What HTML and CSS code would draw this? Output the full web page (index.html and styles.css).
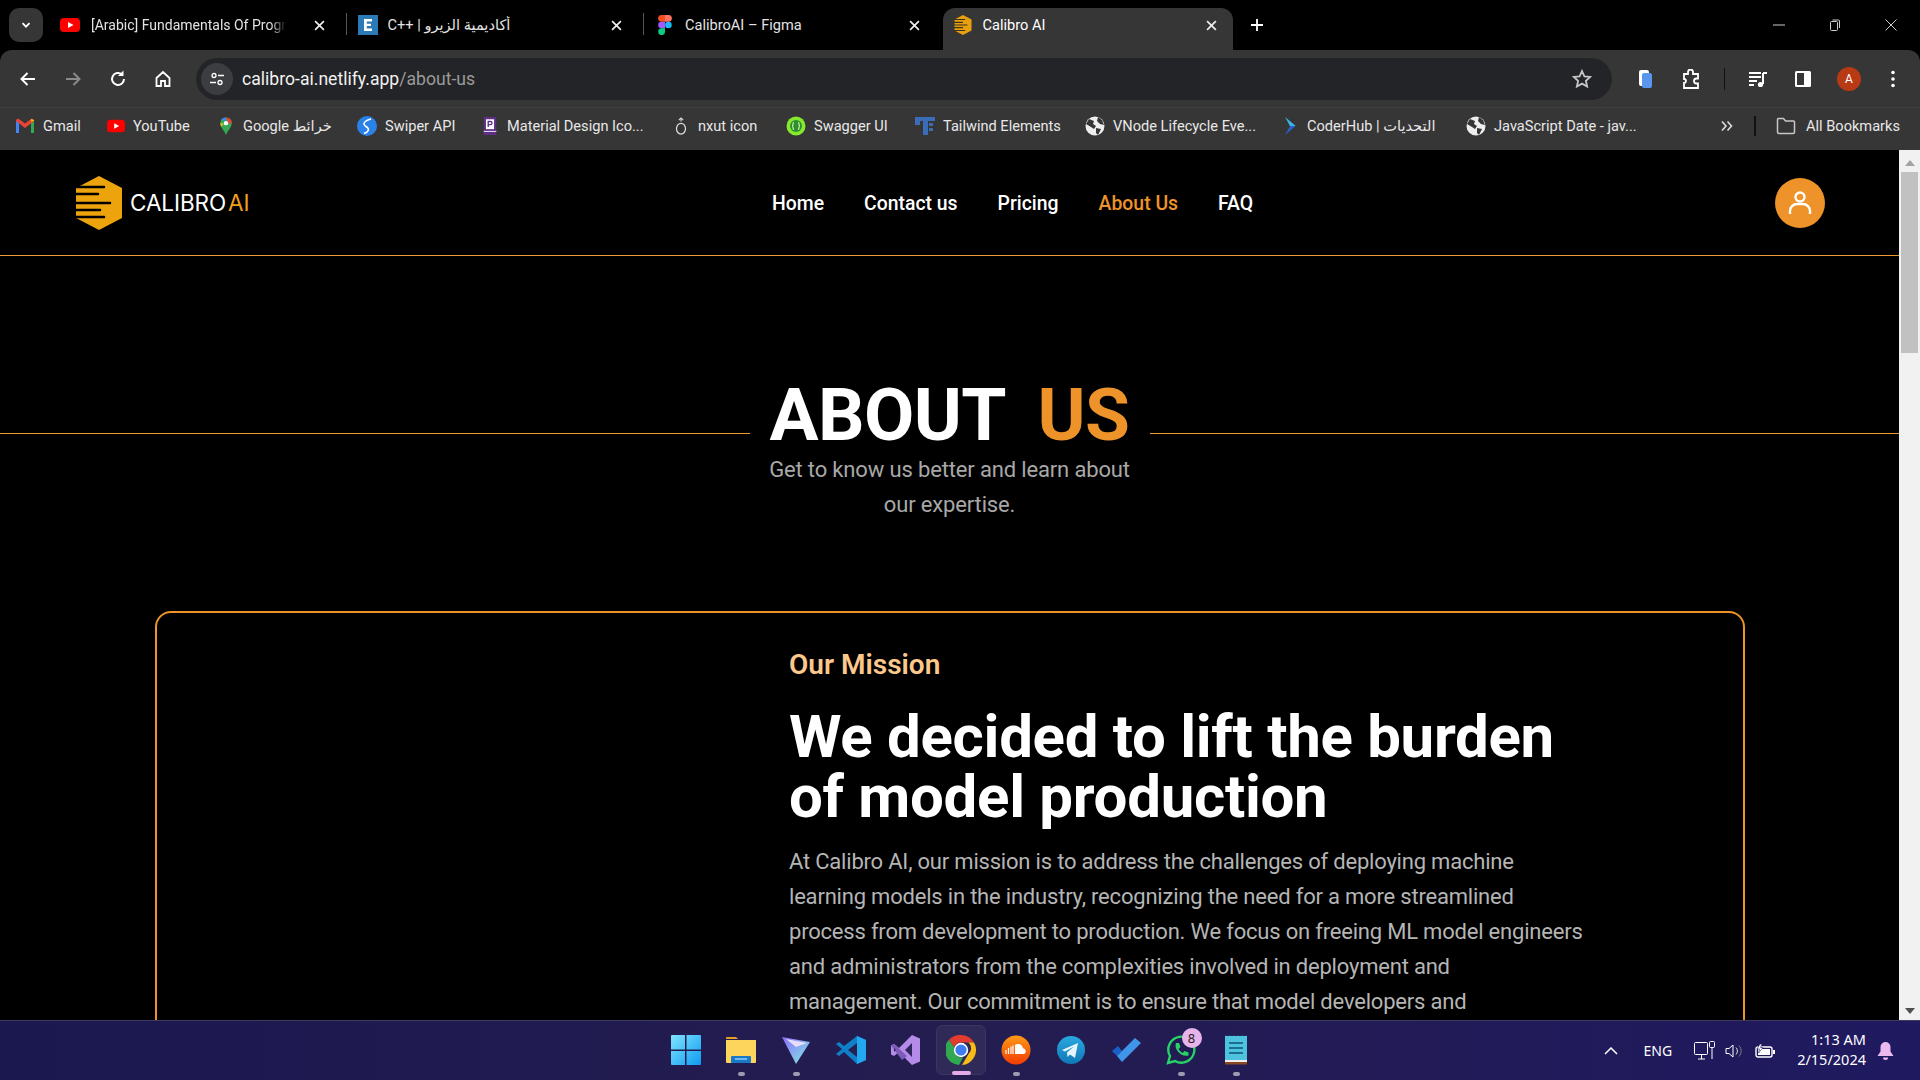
FILE: index.html
```html
<!DOCTYPE html>
<html lang="en">
<head>
<meta charset="utf-8">
<title>Calibro AI</title>
<link rel="stylesheet" href="styles.css">
</head>
<body>
<div class="tabstrip">
  <div class="tabmenu"><svg width="12" height="12" viewBox="0 0 12 12"><path d="M2.5 4.2 6 7.7l3.500-3.500" fill="none" stroke="#fff" stroke-width="1.800"/></svg></div>
  <div class="tabs">
    <div class="tab sep">
      <svg class="fav" viewBox="0 0 20 20"><rect y="3" width="20" height="14" rx="4" fill="#f00"/><path d="M8 7l5.500 3L8 13z" fill="#fff"/></svg>
      <span class="tabtitle fade">[Arabic] Fundamentals Of Progr</span>
      <svg class="close" viewBox="0 0 10 10"><path d="M1 1l8 8M9 1l-8 8" stroke="#eee" stroke-width="1.500"/></svg>
    </div>
    <div class="tab sep">
      <svg class="fav" viewBox="0 0 20 20"><rect width="20" height="20" fill="#2a7ab8"/><path d="M6 4h8v2.400H8.800v2.300H13V11H8.800v2.600H14V16H6z" fill="#fff"/></svg>
      <span class="tabtitle">C++ | أكاديمية الزيرو</span>
      <svg class="close" viewBox="0 0 10 10"><path d="M1 1l8 8M9 1l-8 8" stroke="#eee" stroke-width="1.500"/></svg>
    </div>
    <div class="tab">
      <svg class="fav" viewBox="0 0 14 20"><path d="M3.500 0H7v6.700H3.500a3.350 3.350 0 0 1 0-6.700z" fill="#f24e1e"/><path d="M7 0h3.500a3.350 3.350 0 0 1 0 6.700H7z" fill="#ff7262"/><path d="M3.500 6.700H7v6.600H3.500a3.300 3.300 0 0 1 0-6.600z" fill="#a259ff"/><circle cx="10.400" cy="10" r="3.300" fill="#1abcfe"/><path d="M3.500 13.300H7v3.400a3.400 3.400 0 1 1-3.500-3.400z" fill="#0acf83"/></svg>
      <span class="tabtitle">CalibroAI – Figma</span>
      <svg class="close" viewBox="0 0 10 10"><path d="M1 1l8 8M9 1l-8 8" stroke="#eee" stroke-width="1.500"/></svg>
    </div>
    <div class="tab active">
      <svg class="fav" viewBox="0 0 48 54"><path d="M24 0l23 12v30L24 54 1 42V12z" fill="#e8a00e"/><path d="M0 12h30M0 20h24M0 27h36M0 34h24M0 42h30" stroke="#3a3020" stroke-width="3"/></svg>
      <span class="tabtitle">Calibro AI</span>
      <svg class="close" viewBox="0 0 10 10"><path d="M1 1l8 8M9 1l-8 8" stroke="#eee" stroke-width="1.500"/></svg>
    </div>
    <div class="newtab"><svg width="14" height="14" viewBox="0 0 14 14"><path d="M7 1v12M1 7h12" stroke="#fff" stroke-width="1.800"/></svg></div>
  </div>
  <div class="winctl">
    <svg width="12" height="12" viewBox="0 0 12 12"><path d="M0 6h12" stroke="#ccc"/></svg>
    <svg width="12" height="12" viewBox="0 0 12 12"><rect x="1.500" y="2.500" width="7" height="9" rx="1" fill="none" stroke="#ccc"/><path d="M3.500 1h6a1 1 0 0 1 1 1v7" fill="none" stroke="#ccc"/></svg>
    <svg width="12" height="12" viewBox="0 0 12 12"><path d="M0.500 0.500l11 11M11.500 0.500l-11 11" stroke="#ccc"/></svg>
  </div>
</div>

<div class="toolbar">
  <svg class="tool" viewBox="0 0 20 20"><path d="M17 10H4M9.500 4 3.500 10l6 6" fill="none" stroke="#fff" stroke-width="2"/></svg>
  <svg class="tool" viewBox="0 0 20 20"><path d="M3 10h13M10.500 4l6 6-6 6" fill="none" stroke="#8a8a8a" stroke-width="2"/></svg>
  <svg class="tool" viewBox="0 0 20 20"><path d="M16 10a6 6 0 1 1-2-4.500" fill="none" stroke="#fff" stroke-width="2"/><path d="M15.500 1.500v5.500H10z" fill="#fff"/></svg>
  <svg class="tool" viewBox="0 0 20 20"><path d="M3.500 9 10 3l6.500 6v8h-4.500v-5H8v5H3.500z" fill="none" stroke="#fff" stroke-width="1.800"/></svg>
  <div class="omnibox">
    <div class="siteinfo"><svg width="16" height="16" viewBox="0 0 16 16"><circle cx="5" cy="4.500" r="2" fill="none" stroke="#fff" stroke-width="1.300"/><path d="M9 4.500h6M1 11.500h6" stroke="#fff" stroke-width="1.300"/><circle cx="11" cy="11.500" r="2" fill="none" stroke="#fff" stroke-width="1.300"/></svg></div>
    <span class="url">calibro-ai.netlify.app<span class="urlpath">/about-us</span></span>
    <svg class="star" viewBox="0 0 20 20"><path d="M10 2l2.400 5.300 5.800.6-4.300 3.900 1.200 5.700-5.100-2.900-5.100 2.900 1.200-5.700L1.800 7.900l5.800-.6z" fill="none" stroke="#c7c7c7" stroke-width="1.800"/></svg>
  </div>
  <div class="toolright">
    <svg class="tool ext" viewBox="0 0 20 20"><rect x="3" y="1" width="10" height="16" rx="2" fill="#fff"/><rect x="6" y="4" width="10" height="15" rx="2" fill="#5b96ee"/></svg>
    <svg class="tool ext" viewBox="0 0 20 20"><path d="M3 5h4V3a2.500 2.500 0 0 1 5 0v2h5v4.500h-1.500a2.500 2.500 0 0 0 0 5H17V19H3v-5a2 2 0 0 0 0-4z" fill="none" stroke="#fff" stroke-width="1.800"/></svg>
    <div class="tooldiv"></div>
    <svg class="tool ext" viewBox="0 0 20 20"><path d="M1 4h12M1 8h12M1 12h8M1 16h5" stroke="#fff" stroke-width="2"/><path d="M15 4v11" stroke="#fff" stroke-width="2"/><circle cx="12.500" cy="15.500" r="2.600" fill="#fff"/><path d="M15 4h4" stroke="#fff" stroke-width="2"/></svg>
    <svg class="tool ext" viewBox="0 0 20 20"><rect x="2" y="2" width="16" height="16" rx="1.500" fill="#fff"/><rect x="4" y="4" width="7" height="12" fill="#363636"/></svg>
    <div class="profile">A</div>
    <svg class="tool dots" viewBox="0 0 20 20"><circle cx="10" cy="3.500" r="1.800" fill="#fff"/><circle cx="10" cy="10" r="1.800" fill="#fff"/><circle cx="10" cy="16.500" r="1.800" fill="#fff"/></svg>
  </div>
</div>

<div class="bookmarks">
  <div class="bm"><svg class="bmi gm" viewBox="0 0 20 16"><path d="M1 15V3l3 .500V15z" fill="#4285f4"/><path d="M16 15V3.500l3-.500v12z" fill="#34a853"/><path d="M1 3l9 7 9-7v-.500A2 2 0 0 0 16 1l-6 4.500L4 1a2 2 0 0 0-3 1.500z" fill="#ea4335"/><path d="M16 3.500V1l3 1v1z" fill="#fbbc04"/></svg><span>Gmail</span></div>
  <div class="bm"><svg class="bmi" viewBox="0 0 20 20"><rect y="3" width="20" height="14" rx="4" fill="#f00"/><path d="M8 7l5.500 3L8 13z" fill="#fff"/></svg><span>YouTube</span></div>
  <div class="bm"><svg class="bmi" viewBox="0 0 16 22"><path d="M8 22C6 16 1 13 1 7.500a7 7 0 0 1 14 0C15 13 10 16 8 22z" fill="#34a853"/><path d="M2 3.500A7 7 0 0 1 8 .500V5z" fill="#4285f4"/><path d="M8 .500a7 7 0 0 1 7 7L11 8z" fill="#ea4335"/><path d="M1 7.500 5 8 2.500 12A8 8 0 0 1 1 7.500z" fill="#fbbc04"/><circle cx="8" cy="7.500" r="2.700" fill="#fff"/></svg><span>Google خرائط</span></div>
  <div class="bm"><svg class="bmi big" viewBox="0 0 20 20"><circle cx="10" cy="10" r="10" fill="#2a82e8"/><path d="M14 3C7 5 5 8 9 10.500s3 5-2 7" fill="none" stroke="#fff" stroke-width="1.500"/></svg><span>Swiper API</span></div>
  <div class="bm"><svg class="bmi" viewBox="0 0 16 20"><rect x="1" y="0" width="14" height="20" fill="#5e2f83"/><rect x="3.500" y="2.500" width="9" height="11" fill="#fff"/><path d="M6 11V5h2.500a1.600 1.600 0 0 1 0 3.500H6" fill="none" stroke="#5e2f83" stroke-width="1.500"/><path d="M1 16h14" stroke="#fff"/></svg><span>Material Design Ico...</span></div>
  <div class="bm"><svg class="bmi" viewBox="0 0 16 20"><ellipse cx="8" cy="13" rx="5" ry="6" fill="none" stroke="#ddd" stroke-width="1.400"/><path d="M8 1v4M5.500 3.500 8 1l2.500 2.500" fill="none" stroke="#ddd" stroke-width="1.200"/></svg><span>nxut icon</span></div>
  <div class="bm"><svg class="bmi big" viewBox="0 0 20 20"><circle cx="10" cy="10" r="9.500" fill="#85ea2d"/><circle cx="10" cy="10" r="6" fill="#2f8f30"/><path d="M8 6.500c-2 0 0 3.500-2 3.500 2 0 0 3.500 2 3.500M12 6.500c2 0 0 3.500 2 3.500-2 0 0 3.500-2 3.500" fill="none" stroke="#d8f8a8" stroke-width="1.200"/></svg><span>Swagger UI</span></div>
  <div class="bm"><svg class="bmi big" viewBox="0 0 20 20"><path d="M0 1h20v4h-7v14H8V5H5v4H0z" fill="#3b6cb8"/><path d="M14 7h4v3h-4zM14 12h4v3h-4z" fill="#3b6cb8"/></svg><span>Tailwind Elements</span></div>
  <div class="bm"><svg class="bmi big" viewBox="0 0 20 20"><circle cx="10" cy="10" r="9.500" fill="#eee"/><path d="M4 3l5 2-1 3 3 2-2 3-3-2-5-3zM13 1l4 3 2 5-4-1-3-3zM11 12l5 1-3 6-2-2z" fill="#363636"/></svg><span>VNode Lifecycle Eve...</span></div>
  <div class="bm"><svg class="bmi" viewBox="0 0 16 22"><path d="M2 0l13 11H8z" fill="#38b8e8"/><path d="M15 11 2 22l6-11z" fill="#2b5fc0"/></svg><span>CoderHub | التحديات</span></div>
  <div class="bm"><svg class="bmi big" viewBox="0 0 20 20"><circle cx="10" cy="10" r="9.500" fill="#eee"/><path d="M4 3l5 2-1 3 3 2-2 3-3-2-5-3zM13 1l4 3 2 5-4-1-3-3zM11 12l5 1-3 6-2-2z" fill="#363636"/></svg><span>JavaScript Date - jav...</span></div>
  <div class="bmmore"><svg width="14" height="12" viewBox="0 0 14 12"><path d="M2 1.500 6 6l-4 4.500M7.500 1.500l4 4.500-4 4.500" fill="none" stroke="#ddd" stroke-width="1.600"/></svg></div>
  <div class="bmdiv"></div>
  <div class="bm allbm"><svg class="bmi folder" viewBox="0 0 20 18"><path d="M1.500 2.500a1 1 0 0 1 1-1h5l2 2.500h8a1 1 0 0 1 1 1v10a1.500 1.500 0 0 1-1.500 1.500H3A1.500 1.500 0 0 1 1.500 15z" fill="none" stroke="#c7c7c7" stroke-width="1.500"/></svg><span>All Bookmarks</span></div>
</div>

<div class="viewport">
  <main class="page">
    <header class="site-head">
      <a class="logo">
        <svg class="logomark" viewBox="0 0 48 54"><path d="M24 0l23 12v30L24 54 1 42V12z" fill="#eda30c"/><path d="M-1 11h30M-1 18h24M-1 27h36M-1 34h26M-1 41h30" stroke="#000" stroke-width="2.600" stroke-linecap="round"/></svg>
        <span class="logotext">CALIBRO<b>AI</b></span>
      </a>
      <nav class="nav">
        <a>Home</a><a>Contact us</a><a>Pricing</a><a class="current">About Us</a><a>FAQ</a>
      </nav>
      <div class="avatar"><svg width="26" height="26" viewBox="0 0 26 26"><circle cx="13" cy="7" r="4.500" fill="none" stroke="#fff" stroke-width="2.400"/><path d="M3 24v-3a7 7 0 0 1 7-7h6a7 7 0 0 1 7 7v3" fill="none" stroke="#fff" stroke-width="2.400"/></svg></div>
    </header>

    <section class="hero">
      <div class="rule"></div>
      <div class="herotext">
        <h1>ABOUT <span>US</span></h1>
        <p>Get to know us better and learn about our expertise.</p>
      </div>
      <div class="rule"></div>
    </section>

    <section class="mission">
      <div class="missionimg"></div>
      <div class="missionbody">
        <h3>Our Mission</h3>
        <h2>We decided to lift the burden of model production</h2>
        <p>At Calibro AI, our mission is to address the challenges of deploying machine learning models in the industry, recognizing the need for a more streamlined process from development to production. We focus on freeing ML model engineers and administrators from the complexities involved in deployment and management. Our commitment is to ensure that model developers and</p>
      </div>
    </section>
  </main>
  <div class="scrollbar">
    <svg class="arrow" width="10" height="6" viewBox="0 0 10 6"><path d="M5 0l5 6H0z" fill="#a3a3a3"/></svg>
    <div class="thumb"></div>
    <svg class="arrow down" width="10" height="6" viewBox="0 0 10 6"><path d="M5 6l5-6H0z" fill="#505050"/></svg>
  </div>
</div>

<footer class="taskbar">
  <div class="dock">
    <div class="app"><svg viewBox="0 0 30 30"><defs><linearGradient id="w" x1="0" y1="0" x2="1" y2="1"><stop offset="0" stop-color="#7fe4ff"/><stop offset="1" stop-color="#0f9bf0"/></linearGradient></defs><path d="M0 1a1 1 0 0 1 1-1h13v14.500H0zM15.500 0H29a1 1 0 0 1 1 1v13.500H15.500zM0 16h14v14H1a1 1 0 0 1-1-1zM15.500 16H30v13a1 1 0 0 1-1 1H15.500z" fill="url(#w)"/></svg></div>
    <div class="app run"><svg viewBox="0 0 30 30"><path d="M0 3a1 1 0 0 1 1-1h9l2 2h-12z" fill="#e0a020"/><path d="M0 5h30v22a1 1 0 0 1-1 1H1a1 1 0 0 1-1-1z" fill="#fdd45c"/><rect x="5" y="21" width="20" height="7" rx="1" fill="#1a78c8"/><path d="M9 24h12" stroke="#8cd0f8" stroke-width="1.500"/></svg></div>
    <div class="app run"><svg viewBox="0 0 30 30"><defs><linearGradient id="p" x1="0" y1="0" x2="1" y2="1"><stop offset="0" stop-color="#8f6bff"/><stop offset="1" stop-color="#7ef0e0"/></linearGradient></defs><path d="M1 2l28 5-14 22z" fill="url(#p)"/><path d="M5 4l21 4-11 4z" fill="#e7defc"/></svg></div>
    <div class="app"><svg viewBox="0 0 30 30"><path d="M21 1 30 5v20l-9 4L8 17l-5 4-3-2 6-5-6-5 3-2 5 4z" fill="#0f7fc8"/><path d="M21 1l9 4v20l-9 4z" fill="#22a7f0"/><path d="M21 8v14l-9-7z" fill="#252050"/></svg></div>
    <div class="app"><svg viewBox="0 0 30 30"><path d="M21 0l8 3.500v23L21 30 8 17l-5 4-3-1.500v-9L3 9l5 4z" fill="#b48be8"/><path d="M0 10.500 3 9l13 12-5 4z" fill="#7c5cb8"/><path d="M21 8v14l-7-7z" fill="#302560"/><path d="M3 13v4l2-2z" fill="#302560"/></svg></div>
    <div class="app active"><svg viewBox="0 0 30 30"><path d="M15 0a15 15 0 0 1 13 7.500H15a7.500 7.500 0 0 0-7 5L3 4.700A15 15 0 0 1 15 0z" fill="#e33b2e"/><path d="M28 7.500A15 15 0 0 1 16 30l6.500-11a7.500 7.500 0 0 0 0-11.500z" fill="#f9bc15"/><path d="M3 4.700 8.500 13 a7.500 7.500 0 0 0 8.500 9.500L13 29.900A15 15 0 0 1 3 4.700z" fill="#2fa84f"/><circle cx="15" cy="15" r="7.200" fill="#fff"/><circle cx="15" cy="15" r="5.600" fill="#3d7df0"/></svg></div>
    <div class="app run"><svg viewBox="0 0 30 30"><defs><linearGradient id="s" x1="0" y1="0" x2="0" y2="1"><stop offset="0" stop-color="#ff9a16"/><stop offset="1" stop-color="#f23c04"/></linearGradient></defs><circle cx="15" cy="15" r="14.500" fill="url(#s)"/><path d="M14 10a5 5 0 0 1 8 3.300 3 3 0 0 1 1 5.700H14z" fill="#fff"/><path d="M5 15v4M7.500 13v6M10 11.500V19M12 10.500V19" stroke="#fff" stroke-width="1.200"/></svg></div>
    <div class="app"><svg viewBox="0 0 30 30"><defs><linearGradient id="t" x1="0" y1="0" x2="0" y2="1"><stop offset="0" stop-color="#2aa7e0"/><stop offset="1" stop-color="#1079b8"/></linearGradient></defs><circle cx="15" cy="15" r="14" fill="url(#t)"/><path d="M6 15l16-7-3 15-5-3.500-2.500 2.500-.5-4.500 7-6-9 5z" fill="#e8f4fb"/></svg></div>
    <div class="app"><svg viewBox="0 0 30 30"><path d="M1 16l6-5 4 5-5 5z" fill="#1a5fc8"/><path d="M6 21 24 3l6 5L11 27z" fill="#3f95ea"/></svg></div>
    <div class="app run"><svg viewBox="0 0 30 30"><path d="M2 28l2-7A13 13 0 1 1 9 26z" fill="none" stroke="#25d366" stroke-width="2.400"/><path d="M10 8l3 0 1.500 4-2 2a9 9 0 0 0 4 4l2-2 4 1.500v3c-7 2-15-6-12.500-12.500z" fill="#25d366"/></svg><span class="count">8</span></div>
    <div class="app run"><svg viewBox="0 0 24 30"><rect x="1" y="1" width="22" height="27" fill="#4dc3e0"/><path d="M2 1v-1M6 1v-1M10 1v-1M14 1v-1M18 1v-1M22 1v-1" stroke="#1a5f80"/><path d="M5 8h14M5 13h14M5 18h14" stroke="#1a6f90" stroke-width="2"/><rect x="1" y="25" width="22" height="2" fill="#eee"/><rect x="1" y="27" width="22" height="2.500" fill="#8a4a20"/></svg></div>
  </div>
  <div class="tray">
    <svg class="caret" width="14" height="8" viewBox="0 0 14 8"><path d="M1 7l6-6 6 6" fill="none" stroke="#fff" stroke-width="1.500"/></svg>
    <span class="lang">ENG</span>
    <svg class="trayicon" width="21" height="20" viewBox="0 0 21 20"><rect x="0.500" y="1.500" width="13" height="12" rx="1" fill="none" stroke="#fff"/><path d="M4 18h7M7.500 14v4M18 6v12" stroke="#fff"/><rect x="15.500" y="0.500" width="5" height="6" rx="1" fill="none" stroke="#fff"/></svg>
    <svg class="trayicon" width="20" height="16" viewBox="0 0 20 16"><path d="M1 5.500h3l4-3.500v12l-4-3.500H1z" fill="none" stroke="#fff"/><path d="M11 4.500a5 5 0 0 1 0 7" fill="none" stroke="#ddd"/><path d="M14 2.500a8 8 0 0 1 0 11" fill="none" stroke="#777"/></svg>
    <svg class="trayicon" width="20" height="14" viewBox="0 0 20 14"><rect x="1" y="3" width="16" height="10" rx="2" fill="none" stroke="#fff" stroke-width="1.400"/><rect x="3" y="5" width="12" height="6" fill="#fff"/><rect x="18" y="6" width="2" height="4" fill="#fff"/><path d="M5 0 2 5h2.500L3.500 9 8 3.500H5.500L7 0z" fill="#fff" stroke="#211c5c" stroke-width=".6"/></svg>
    <div class="clock"><div>1:13 AM</div><div>2/15/2024</div></div>
    <svg class="bell" width="17" height="20" viewBox="0 0 17 20"><path d="M8.500 1a5 5 0 0 1 5 5v4.500l3 4.500H.5l3-4.500V6a5 5 0 0 1 5-5z" fill="#ecb9ee"/><path d="M6 16.500a2.500 2.500 0 0 0 5 0z" fill="#ecb9ee"/></svg>
  </div>
</footer>
</body>
</html>
```

FILE: styles.css
```css
* { box-sizing: border-box; }
html, body { margin: 0; height: 100%; overflow: hidden; }
body {
  display: flex;
  flex-direction: column;
  height: 1080px;
  width: 1920px;
  background: #000;
  font-family: Roboto, "Noto Sans", "DejaVu Sans", sans-serif;
  color: #fff;
}

/* browser chrome */
.tabstrip { display: flex; align-items: flex-end; height: 50px; background: #000; flex: none; }
.tabmenu {
  width: 34px; height: 34px; margin: 0 0 8px 9px; border-radius: 10px; background: #363636;
  display: flex; align-items: center; justify-content: center; flex: none;
}
.tabs { display: flex; align-items: flex-end; margin-left: 7px; flex: 1; height: 50px; }
.tab {
  width: 297.500px; height: 42px; display: flex; align-items: center; padding: 0 23px 8px 10px;
  font-size: 14.600px; color: #e3e3e3; position: relative; flex: none;
}
.tab.sep::after { content: ""; position: absolute; right: 1px; top: 5px; height: 22px; width: 1px; background: #555; }
.tab.active { background: #363636; border-radius: 12px 12px 0 0; width: 290px; color: #fff; padding: 0 16px 8px 10px; }
.fav { width: 20px; height: 20px; flex: none; margin-right: 10px; }
.tab:first-child .fav { margin-right: 11px; }
.tabtitle { flex: 1; white-space: nowrap; overflow: hidden; }
.tabtitle.fade { flex: none; max-width: 208px; font-size: 14px; -webkit-mask-image: linear-gradient(90deg, #000 92%, transparent); mask-image: linear-gradient(90deg, #000 92%, transparent); }
.close { width: 11px; height: 11px; flex: none; margin-left: auto; }
.newtab { width: 48px; height: 42px; display: flex; align-items: center; justify-content: center; padding-bottom: 8px; }
.winctl { display: flex; gap: 44px; align-items: center; padding: 0 23px 0 0; height: 50px; flex: none; }

.toolbar {
  display: flex; align-items: center; height: 58px; background: #363636; flex: none;
  padding: 1px 0 0 18px; border-radius: 12px 12px 0 0; border-bottom: 1px solid #3f3f3f;
}
.tool { width: 20px; height: 20px; flex: none; margin-right: 25px; }
.omnibox {
  display: flex; align-items: center; width: 1416px; height: 42px; margin-left: -2px; background: #232427;
  border-radius: 21px; padding: 0 20px 0 5px; flex: none;
}
.siteinfo { width: 32px; height: 32px; border-radius: 50%; background: #3c3d40; display: flex; align-items: center; justify-content: center; flex: none; }
.url { font-size: 17.600px; color: #f1f1f1; margin-left: 9px; flex: 1; }
.urlpath { color: #9a9a9a; }
.star { width: 20px; height: 20px; }
.toolright { display: flex; align-items: center; padding-left: 24px; }
.ext { margin-right: 0; }
.toolright .ext + .ext { margin-left: 25px; }
.tooldiv { width: 1px; height: 22px; background: #111; margin: 0 23px; }
.profile {
  width: 24px; height: 24px; border-radius: 50%; background: #b83a14; font-size: 12px;
  display: flex; align-items: center; justify-content: center; margin-left: 24px;
}
.dots { margin: 0 0 0 22px; }

.bookmarks {
  display: grid; align-items: center; height: 42px; background: #363636; flex: none; padding: 0 0 7px 15px;
  grid-template-columns: 92px 110px 140px 124px 191px 114px 129px 170px 196px 185px 254px 34px 2px auto;
  font-size: 14.600px; color: #e8e8e8;
}
.bm { display: flex; align-items: center; gap: 8px; white-space: nowrap; }
.bmi { width: 18px; height: 18px; flex: none; }
.bmi.big { width: 20px; height: 20px; }
.bmi.gm { width: 20px; }
.bmmore { display: flex; }
.bmdiv { width: 2px; height: 20px; background: #111; }
.allbm { margin-left: 20px; gap: 10px; }
.folder { width: 20px; }

/* page */
.viewport { flex: 1; min-height: 0; display: flex; overflow: hidden; }
.page { flex: 1; min-width: 0; background: #000; overflow: hidden; }
.site-head {
  height: 106px; display: flex; align-items: center; border-bottom: 1px solid #ee9a33;
  padding: 0 74px 0 74px;
}
.logo { display: flex; align-items: center; gap: 6px; width: 698px; flex: none; }
.logomark { width: 50px; height: 54px; flex: none; }
.logotext { font-family: Inter, Roboto, sans-serif; font-weight: 400; font-size: 22.500px; letter-spacing: -.1px; color: #fff; }
.logotext b { font-weight: 400; color: #ee9f1c; margin-left: 2px; }
.nav { display: flex; gap: 40px; font-size: 19.400px; font-weight: 500; flex: 1; margin-top: 2px; }
.nav .current { color: #ee9329; }
.avatar { width: 50px; height: 50px; border-radius: 50%; background: #ee9329; display: flex; align-items: center; justify-content: center; flex: none; }

.hero { display: grid; grid-template-columns: 1fr 360px 1fr; column-gap: 20px; padding-top: 129px; }
.rule { height: 1px; background: #ee9a33; margin-top: 48px; }
.herotext { text-align: center; }
.herotext h1 { margin: -6px -20px 0; font-size: 73px; line-height: 73px; font-weight: 700; white-space: pre-wrap; letter-spacing: -.6px; word-spacing: 16px; }
.herotext h1 span { color: #ee9329; }
.herotext p { margin: 0 -6px; font-size: 22px; line-height: 35px; color: #a8a8a8; letter-spacing: -.15px; }

.mission {
  margin: 89px 154px 0 155px; border: 2px solid #ee9329; border-radius: 16px; height: 500px;
  display: grid; grid-template-columns: 632px 1fr; padding-right: 158px;
}
.missionbody { padding-top: 34px; }
.missionbody h3 { margin: 0; font-size: 28px; line-height: 36px; font-weight: 600; color: #fcc88c; }
.missionbody h2 { margin: 24px 0 0; font-size: 60px; line-height: 60px; font-weight: 700; color: #fff; letter-spacing: -.3px; }
.missionbody p { margin: 17px 0 0; font-size: 22px; line-height: 35px; color: #b5b5b5; letter-spacing: -.2px; }

.scrollbar { width: 21px; flex: none; background: #f1f1f1; display: flex; flex-direction: column; align-items: center; }
.arrow { margin-top: 10px; flex: none; }
.thumb { width: 17px; height: 181px; background: #c1c1c1; margin-top: 6px; flex: none; }
.arrow.down { margin-top: auto; margin-bottom: 6px; }

/* taskbar */
.taskbar {
  height: 60px; flex: none; display: grid; grid-template-columns: 1fr auto 1fr;
  background: linear-gradient(90deg, #1b1850, #241d50 50%, #1f1960);
  border-top: 1px solid #3e3a60;
}
.dock { grid-column: 2; display: flex; gap: 5px; align-items: flex-start; padding-top: 4px; margin-left: 1px; font-family: "Noto Sans", sans-serif; }
.app { width: 50px; height: 50px; display: flex; align-items: center; justify-content: center; position: relative; border-radius: 6px; border: 1px solid transparent; }
.app svg { width: 30px; height: 30px; }
.app.run::after { content: ""; position: absolute; bottom: -2px; left: 21px; width: 7px; height: 4px; border-radius: 2px; background: #9d9bb0; }
.app.active { background: #2f2a58; border-color: #3a3562; }
.app.active::after { content: ""; position: absolute; bottom: -1px; left: 15px; width: 19px; height: 4px; border-radius: 2px; background: #e6a9ea; }
.count {
  position: absolute; top: 2px; right: 3px; width: 20px; height: 20px; border-radius: 50%; background: #e6b3ea;
  color: #222; font-size: 13px; display: flex; align-items: center; justify-content: center;
}
.tray { grid-column: 3; display: flex; align-items: center; justify-content: flex-end; padding-right: 26px; font-family: "Noto Sans", sans-serif; font-size: 14.500px; }
.caret { margin-right: 26px; }
.lang { font-size: 14px; margin-right: 22px; }
.trayicon { margin-right: 10px; }
.clock { text-align: right; line-height: 20px; margin: 0 11px 4px 12px; }
.bell { flex: none; }
```
